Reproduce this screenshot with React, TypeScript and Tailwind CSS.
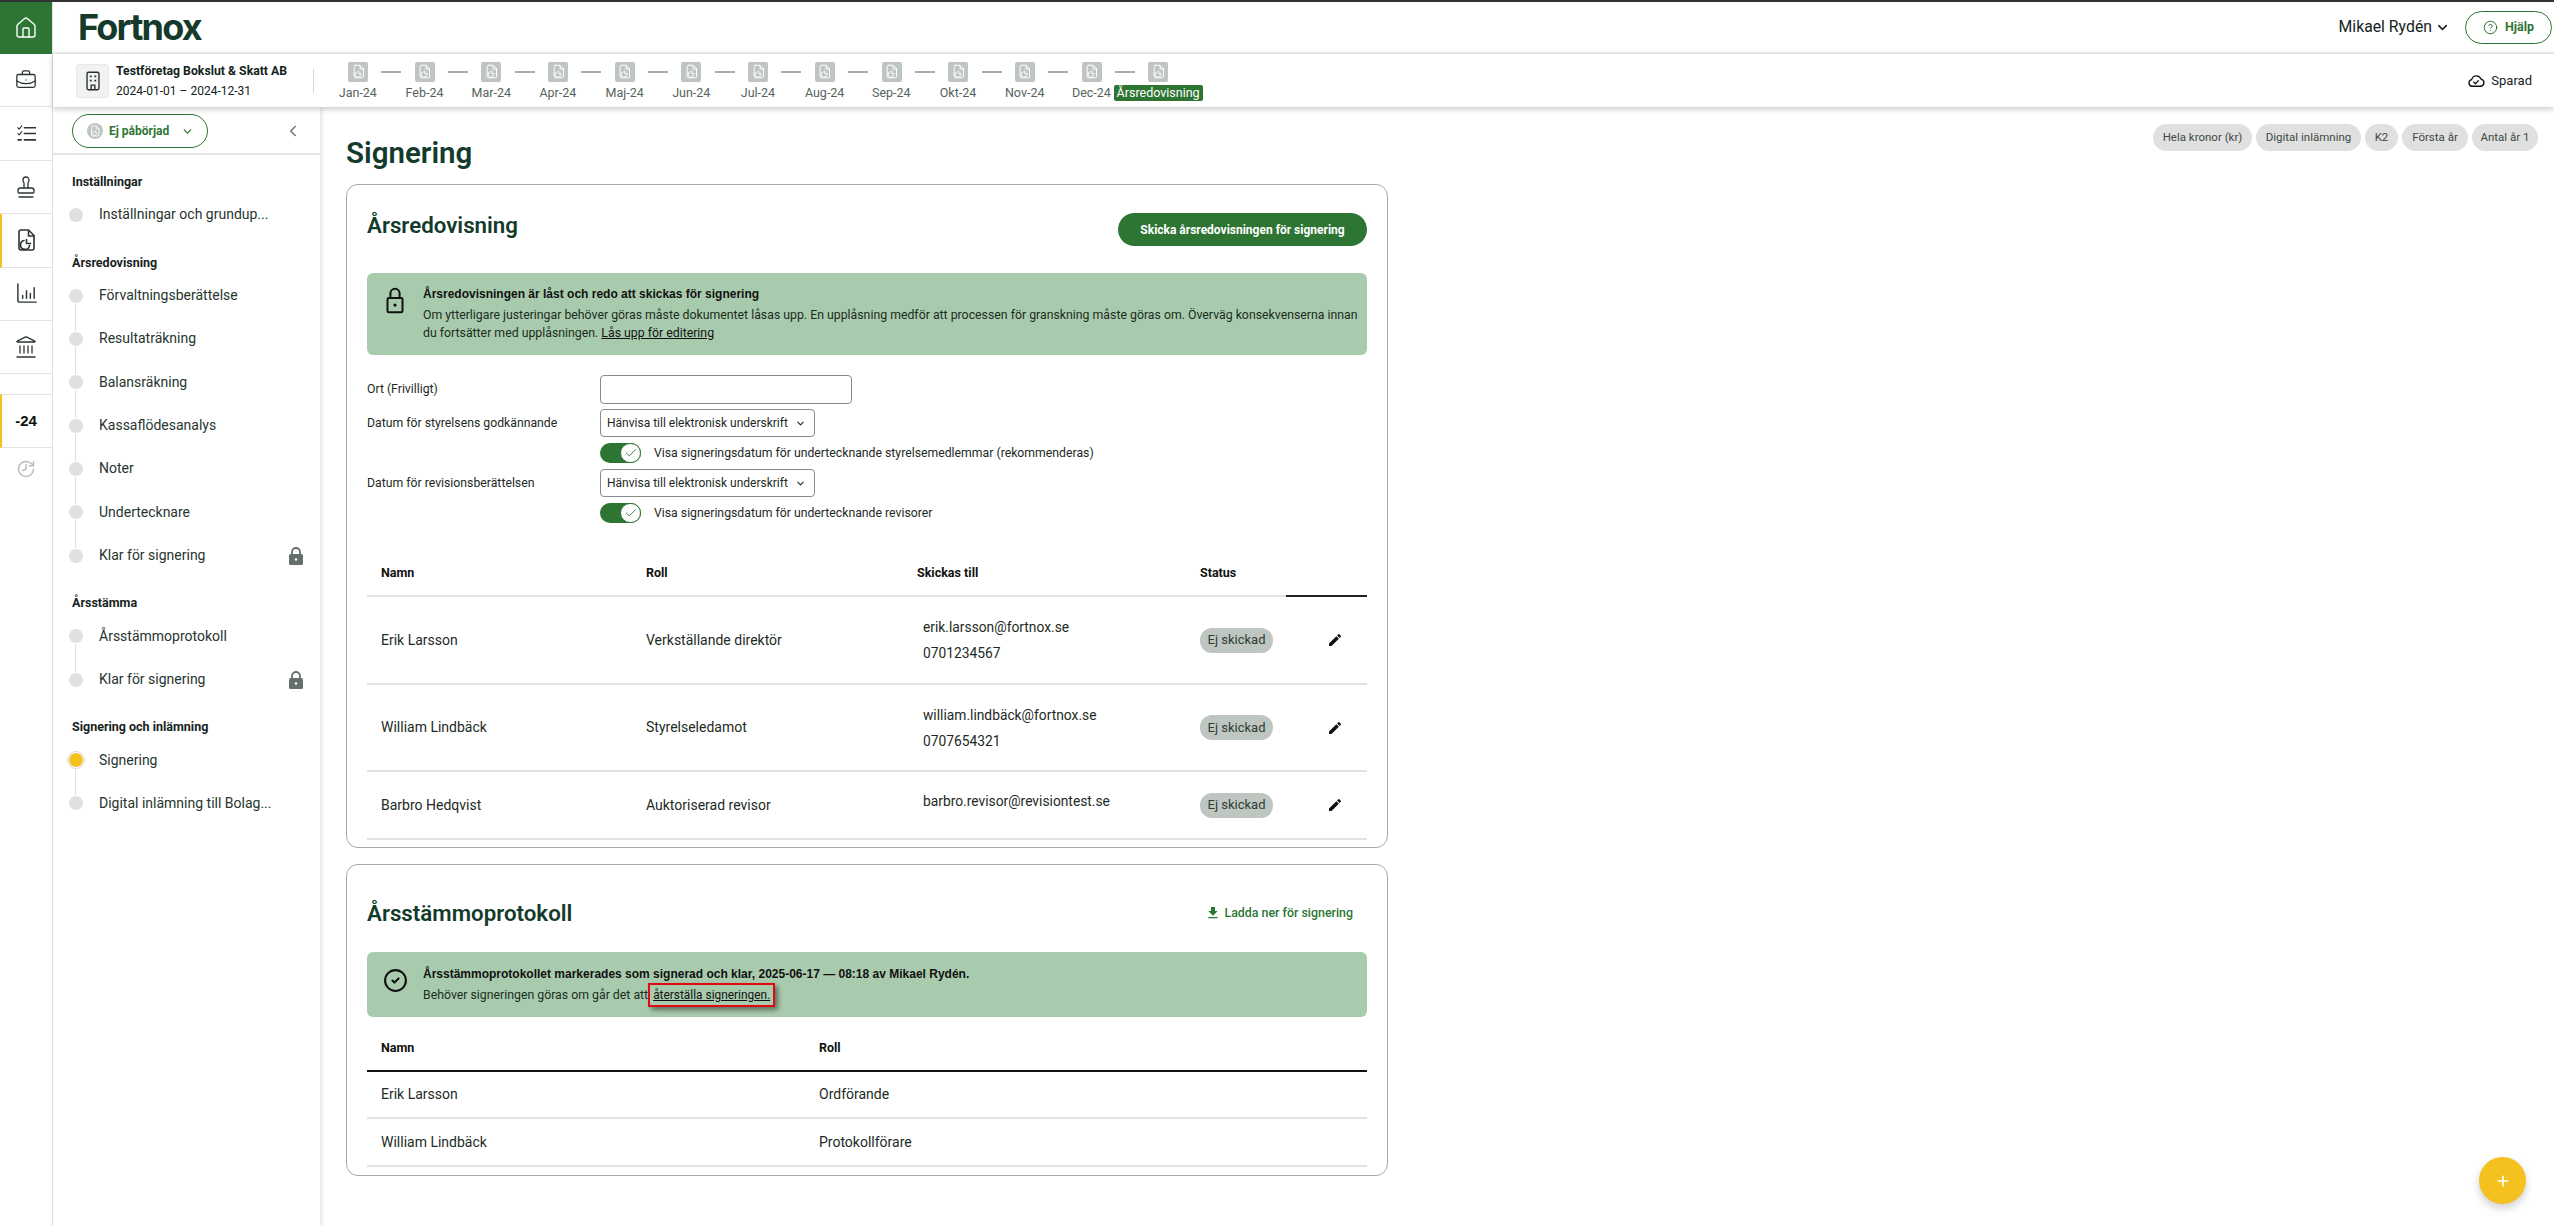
import { BriefcaseBusiness, Check, ChevronDown, ChevronLeft, CircleCheck, CircleHelp, History, House, Landmark, Plus, Stamp } from "lucide-react";
import { MdEdit, MdFileDownload } from "react-icons/md";

const months = ["Jan-24", "Feb-24", "Mar-24", "Apr-24", "Maj-24", "Jun-24", "Jul-24", "Aug-24", "Sep-24", "Okt-24", "Nov-24", "Dec-24"];

const DocIcon = ({ className }: { className?: string }) => (
  <svg viewBox="0 0 24 24" fill="none" stroke="currentColor" strokeWidth="1.6" strokeLinejoin="round" strokeLinecap="round" className={className}>
    <path d="M7 2h7.500L20 7.500V20a2 2 0 0 1-2 2H7a2 2 0 0 1-2-2V4a2 2 0 0 1 2-2z" />
    <path d="M14.500 2.500V8H20" />
    <path d="M10 12.500a4.500 4.500 0 1 0 5.500 5" />
    <path d="M12.500 11.500v4h4" />
  </svg>
);

const ChartIcon = () => (
  <svg viewBox="0 0 24 24" fill="none" stroke="currentColor" strokeWidth="1.5" strokeLinecap="round" className="w-[23px] h-[23px]">
    <path d="M3 2v17a2 2 0 0 0 2 2h17" />
    <path d="M8 17v-3M12 17V9M16 17v-5M20 17V6" />
  </svg>
);

const ChecklistIcon = () => (
  <svg viewBox="0 0 18 16" fill="none" stroke="currentColor" strokeLinecap="round" strokeLinejoin="round" className="w-[19px] h-[17px]">
    <path d="M7 2.500h10.500M7 8h10.500M7 14h10.500" strokeWidth="1.500" />
    <path d="M.7 2.500l1.300 1.300L4.500.8M.7 8l1.300 1.300L4.500 6.300" strokeWidth="1" />
    <path d="M1 14h3" strokeWidth="1.500" />
  </svg>
);

const BuildingIcon = () => (
  <svg viewBox="0 0 24 24" fill="none" stroke="#26332c" strokeWidth="1.5" className="w-[22px] h-[22px]">
    <rect x="5.500" y="2.500" width="13" height="19" rx="1.500" />
    <path d="M9.500 6v2M14.500 6v2M9.500 10.500v2M14.500 10.500v2" strokeWidth="2" />
    <path d="M10 21v-4.500h4V21" />
  </svg>
);

const CloudCheckIcon = () => (
  <svg viewBox="0 0 24 24" fill="none" stroke="#111" strokeWidth="1.8" strokeLinecap="round" strokeLinejoin="round" className="w-[18px] h-[18px]">
    <path d="M7 19a4.500 4.500 0 0 1-.8-8.900A6.500 6.500 0 0 1 18.600 9.500 4.800 4.800 0 0 1 18 19z" />
    <path d="M9 13.500l2.200 2.200 4-4.200" />
  </svg>
);

const LockTall = () => (
  <svg viewBox="0 0 24 32" fill="none" stroke="#111" strokeWidth="2.4" className="w-[20px] h-[27px]">
    <rect x="3" y="13" width="18" height="17" rx="1.500" />
    <path d="M6.500 13V7.500a5.500 5.500 0 0 1 11 0V13" />
    <circle cx="12" cy="21.500" r="2" fill="#111" stroke="none" />
  </svg>
);

const LockSolid = () => (
  <svg viewBox="0 0 14 18" className="w-[14px] h-[18px] ml-auto shrink-0">
    <path d="M3 7.500V5a4 4 0 0 1 8 0v2.500" fill="none" stroke="#66706b" strokeWidth="1.800" />
    <rect x="0" y="7" width="14" height="11" rx="1.500" fill="#66706b" />
    <circle cx="7" cy="12.500" r="1.200" fill="#fff" />
  </svg>
);

const RailTile = ({ children, active, className }: { children: React.ReactNode; active?: boolean; className?: string }) => (
  <div className={`h-[53.4px] flex items-center justify-center border-b border-[#e2e2e2] ${active ? "border-l-[2px] border-l-[#f5c11f] pr-[2px]" : ""} ${className ?? ""}`}>
    {children}
  </div>
);

const Rail = () => (
  <aside className="w-[53px] shrink-0 border-r border-[#e2e2e2] bg-white text-[#2c3531] flex flex-col">
    <div className="h-[52px] bg-[#2e7534] flex items-center justify-center text-white">
      <House size={24} strokeWidth={1.4} />
    </div>
    <RailTile><BriefcaseBusiness size={22} strokeWidth={1.4} /></RailTile>
    <RailTile><ChecklistIcon /></RailTile>
    <RailTile><Stamp size={24} strokeWidth={1.3} /></RailTile>
    <RailTile active><DocIcon className="w-[24px] h-[24px]" /></RailTile>
    <RailTile><ChartIcon /></RailTile>
    <RailTile><Landmark size={24} strokeWidth={1.3} /></RailTile>
    <div className="h-[20px]" />
    <div className="h-[54px] flex items-center justify-center border-b border-t border-[#e2e2e2] border-l-[2px] border-l-[#f5c11f] pr-[2px] font-['Liberation_Sans',sans-serif] font-bold text-[15px] text-[#111]">-24</div>
    <div className="mt-[11px] flex justify-center text-[#bcbcbc]">
      <History size={20} strokeWidth={1.8} className="-scale-x-100" />
    </div>
  </aside>
);

type NavEntry = { label: string; locked?: boolean; active?: boolean };

const NavRow = ({ label, locked, active, first, last }: NavEntry & { first: boolean; last: boolean }) => (
  <div className="h-[43.33px] flex items-stretch pr-[17px]">
    <div className="w-[14px] shrink-0 flex flex-col items-center">
      <div className={`flex-1 w-px mb-[1px] ${first ? "" : "bg-[#e0e0e0]"}`} />
      {active ? (
        <div className="w-[18px] h-[18px] -mx-[2px] shrink-0 rounded-full border border-[#d8d8d8] flex items-center justify-center">
          <div className="w-[14px] h-[14px] rounded-full bg-[#f5c11f]" />
        </div>
      ) : (
        <div className="w-[14px] h-[14px] shrink-0 rounded-full bg-[#e0e0e0]" />
      )}
      <div className={`flex-1 w-px mt-[1px] ${last ? "" : "bg-[#e0e0e0]"}`} />
    </div>
    <div className="ml-[16.500px] flex-1 flex items-center text-[14px] text-[#27352e]">
      <span>{label}</span>
      {locked && <LockSolid />}
    </div>
  </div>
);

const NavSection = ({ title, items }: { title: string; items: NavEntry[] }) => (
  <section className="mt-[16px] first:mt-0">
    <h3 className="ml-[3.5px] h-[20px] leading-[20px] mb-[1.3px] text-[12.500px] font-bold text-[#17231d]">{title}</h3>
    {items.map((item, i) => (
      <NavRow key={item.label + i} {...item} first={i === 0} last={i === items.length - 1} />
    ))}
  </section>
);

const Sidebar = () => (
  <aside className="w-[267px] shrink-0 bg-white shadow-[2px_0_4px_rgba(0,0,0,0.1)]">
    <div className="h-[48px] border-b-2 border-[#e6e6e6] pl-[19px] pr-[18px] pt-[7px] flex items-start justify-between">
      <div className="w-[136px] h-[34px] rounded-full border border-[#2e7534] flex items-center pl-[14px] gap-[6px]">
        <div className="w-[16px] h-[16px] rounded-full bg-[#bfc5c1] flex items-center justify-center text-white">
          <DocIcon className="w-[12px] h-[12px]" />
        </div>
        <span className="text-[12px] font-bold text-[#2e7534]">Ej påbörjad</span>
        <ChevronDown size={13} strokeWidth={2.4} className="text-[#2e7534] ml-[6px]" />
      </div>
      <ChevronLeft size={18} strokeWidth={2} className="text-[#6d7772] mt-[8px]" />
    </div>
    <nav className="pt-[17px] pl-[15.500px]">
      <NavSection title="Inställningar" items={[{ label: "Inställningar och grundup..." }]} />
      <NavSection
        title="Årsredovisning"
        items={[
          { label: "Förvaltningsberättelse" },
          { label: "Resultaträkning" },
          { label: "Balansräkning" },
          { label: "Kassaflödesanalys" },
          { label: "Noter" },
          { label: "Undertecknare" },
          { label: "Klar för signering", locked: true },
        ]}
      />
      <NavSection title="Årsstämma" items={[{ label: "Årsstämmoprotokoll" }, { label: "Klar för signering", locked: true }]} />
      <NavSection title="Signering och inlämning" items={[{ label: "Signering", active: true }, { label: "Digital inlämning till Bolag..." }]} />
    </nav>
  </aside>
);

const Toggle = () => (
  <div className="w-[41px] h-[20px] rounded-full bg-[#2e7534] flex justify-end shrink-0">
    <div className="w-[21px] h-[20px] rounded-full bg-white border border-[#2e7534] flex items-center justify-center text-[#2e7534]">
      <Check size={14} strokeWidth={1.6} />
    </div>
  </div>
);

const SelectBox = () => (
  <div className="w-[215px] h-[28px] rounded-[4px] border border-[#8a8a8a] flex items-center pl-[6px] pr-[8px] justify-between text-[12px] text-[#1d2a24] whitespace-nowrap">
    <span>Hänvisa till elektronisk underskrift</span>
    <ChevronDown size={11} strokeWidth={2.4} />
  </div>
);

const FormRow = ({ label, children, className }: { label?: string; children: React.ReactNode; className?: string }) => (
  <div className={`flex items-center text-[12.250px] text-[#1d2a24] ${className ?? ""}`}>
    <div className="w-[233px] shrink-0">{label}</div>
    {children}
  </div>
);

const signers = [
  { name: "Erik Larsson", role: "Verkställande direktör", email: "erik.larsson@fortnox.se", phone: "0701234567", h: "h-[88px]" },
  { name: "William Lindbäck", role: "Styrelseledamot", email: "william.lindbäck@fortnox.se", phone: "0707654321", h: "h-[87px]" },
  { name: "Barbro Hedqvist", role: "Auktoriserad revisor", email: "barbro.revisor@revisiontest.se", phone: "", h: "h-[68px]" },
];

const SignerTable = () => (
  <div className="mt-[29px] text-[14px] text-[#1d2a24]">
    <div className="grid grid-cols-[279px_271px_283px_86px_81px] h-[45px] items-center font-bold text-[12.500px] text-[#111]">
      <div className="pl-[14px] h-full flex items-center border-b-2 border-[#e2e2e2]">Namn</div>
      <div className="h-full flex items-center border-b-2 border-[#e2e2e2]">Roll</div>
      <div className="h-full flex items-center border-b-2 border-[#e2e2e2]">Skickas till</div>
      <div className="h-full flex items-center border-b-2 border-[#e2e2e2]">Status</div>
      <div className="h-full border-b-2 border-[#222]" />
    </div>
    {signers.map((s) => (
      <div key={s.name} className={`grid grid-cols-[279px_271px_283px_86px_81px] items-center border-b-2 border-[#e2e2e2] ${s.h}`}>
        <div className="pl-[14px]">{s.name}</div>
        <div>{s.role}</div>
        <div className={`pl-[6px] leading-[26px] text-[13.800px] ${s.phone ? "" : "mb-[8px]"}`}>
          <div>{s.email}</div>
          {s.phone && <div>{s.phone}</div>}
        </div>
        <div>
          <span className="inline-flex items-center justify-center w-[73px] h-[25px] rounded-[12px] bg-[#bfc6c2] text-[13px] text-[#2a4034]">Ej skickad</span>
        </div>
        <div className="pl-[41px] text-[#111]">
          <MdEdit size={16} />
        </div>
      </div>
    ))}
  </div>
);

const ProtocolTable = () => (
  <div className="mt-[10px] text-[14px] text-[#1d2a24]">
    <div className="grid grid-cols-[438px_1fr] h-[45px] items-center pl-[14px] font-bold text-[12.500px] text-[#111] border-b-2 border-[#111]">
      <div>Namn</div>
      <div>Roll</div>
    </div>
    <div className="grid grid-cols-[438px_1fr] h-[47px] items-center pl-[14px] border-b-2 border-[#e2e2e2]">
      <div>Erik Larsson</div>
      <div>Ordförande</div>
    </div>
    <div className="grid grid-cols-[438px_1fr] h-[48px] items-center pl-[14px] border-b-2 border-[#e2e2e2]">
      <div>William Lindbäck</div>
      <div>Protokollförare</div>
    </div>
  </div>
);

export default function App() {
  return (
    <div className="relative w-screen h-screen overflow-hidden bg-white border-t-2 border-[#333] font-['Roboto',sans-serif] flex">
      <Rail />
      <div className="flex-1 flex flex-col min-w-0">
        <header className="h-[52px] shrink-0 border-b-2 border-[#ececec] flex items-center justify-between pl-[25px] pr-[2px]">
          <span className="font-['Inter',sans-serif] font-bold text-[36px] leading-none tracking-[-1.800px] text-[#143a2c]">Fortnox</span>
          <div className="flex items-center">
            <span className="text-[15.800px] text-[#14231c]">Mikael Rydén</span>
            <ChevronDown size={15} strokeWidth={2.4} className="ml-[3px] text-[#14231c]" />
            <div className="ml-[15px] w-[87px] h-[33px] rounded-full border border-[#2e7534] flex items-center justify-center gap-[7px] text-[#2e7534]">
              <CircleHelp size={15} strokeWidth={1.6} />
              <span className="text-[12.500px] font-bold">Hjälp</span>
            </div>
          </div>
        </header>

        <div className="relative z-10 h-[53px] shrink-0 bg-white shadow-[0_2px_6px_rgba(0,0,0,0.22)] flex items-center pl-[23px] pr-[22px]">
          <div className="w-[33px] h-[34px] rounded-[3px] bg-[#f2f2f2] border border-[#e8e8e8] flex items-center justify-center">
            <BuildingIcon />
          </div>
          <div className="ml-[7px] w-[197px] text-[12px] leading-[20px] text-[#14231c]">
            <div className="font-bold text-[12.250px]">Testföretag Bokslut &amp; Skatt AB</div>
            <div>2024-01-01 – 2024-12-31</div>
          </div>
          <div className="w-px h-[24px] bg-[#d8d8d8]" />
          <div className="ml-[10.500px] w-[867px] pt-[1px]">
            <div className="flex items-center pl-[23.500px] gap-[13.350px]">
              {months.map((m) => (
                <div key={m} className="flex items-center gap-[13.350px]">
                  <div className="w-[20px] h-[20px] rounded-[2px] bg-[#bfc5c1] flex items-center justify-center text-white">
                    <DocIcon className="w-[15px] h-[15px]" />
                  </div>
                  <div className="w-[20px] h-[2px] bg-[#a8aeab]" />
                </div>
              ))}
              <div className="w-[20px] h-[20px] rounded-[2px] bg-[#bfc5c1] flex items-center justify-center text-white">
                <DocIcon className="w-[15px] h-[15px]" />
              </div>
            </div>
            <div className="grid grid-cols-[repeat(13,66.700px)] mt-[3px] text-[12.500px] leading-[16px] text-[#55635c] text-center">
              {months.map((m) => (
                <div key={m}>{m}</div>
              ))}
              <div className="justify-self-center px-[3px] rounded-[2px] bg-[#2e7534] text-white whitespace-nowrap">Årsredovisning</div>
            </div>
          </div>
          <div className="ml-auto flex items-center gap-[6px] text-[13px] text-[#14231c]">
            <CloudCheckIcon />
            <span>Sparad</span>
          </div>
        </div>

        <div className="flex-1 flex min-h-0">
          <Sidebar />
          <main className="flex-1 min-w-0 pl-[26px] pr-[16px] pt-[17px]">
            <div className="flex items-start justify-between h-[60px]">
              <h1 className="mt-[9px] text-[29.500px] leading-[40px] font-semibold text-[#143a2c]">Signering</h1>
              <div className="flex gap-[4px] text-[11.500px] text-[#3d4a43]">
                <span className="w-[99px] h-[27px] rounded-full bg-[#e0e0e0] flex items-center justify-center">Hela kronor (kr)</span>
                <span className="w-[105px] h-[27px] rounded-full bg-[#e0e0e0] flex items-center justify-center">Digital inlämning</span>
                <span className="w-[33px] h-[27px] rounded-full bg-[#e0e0e0] flex items-center justify-center">K2</span>
                <span className="w-[66px] h-[27px] rounded-full bg-[#e0e0e0] flex items-center justify-center">Första år</span>
                <span className="w-[66px] h-[27px] rounded-full bg-[#e0e0e0] flex items-center justify-center">Antal år 1</span>
              </div>
            </div>

            <section className="w-[1042px] h-[664px] rounded-[12px] border border-[#a8a8a8] pl-[20px] pr-[20px] pt-[28px]">
              <div className="flex items-start justify-between">
                <h2 className="text-[22.300px] leading-[24px] font-semibold text-[#143a2c]">Årsredovisning</h2>
                <button className="w-[249px] h-[33px] rounded-full bg-[#2e7534] text-white text-[12px] font-bold">Skicka årsredovisningen för signering</button>
              </div>
              <div className="mt-[27px] h-[82px] rounded-[6px] bg-[#a9cbad] flex text-[12.300px] leading-[18px] text-[#1b2b22]">
                <div className="w-[56px] shrink-0 pt-[14px] flex justify-center"><LockTall /></div>
                <div className="pt-[12px] whitespace-nowrap">
                  <div className="font-['Liberation_Sans',sans-serif] font-bold text-[12px] text-[#111]">Årsredovisningen är låst och redo att skickas för signering</div>
                  <div className="mt-[3px]">Om ytterligare justeringar behöver göras måste dokumentet låsas upp. En upplåsning medför att processen för granskning måste göras om. Överväg konsekvenserna innan</div>
                  <div>du fortsätter med upplåsningen. <a className="underline text-[#111]">Lås upp för editering</a></div>
                </div>
              </div>

              <FormRow label="Ort (Frivilligt)" className="mt-[20px]">
                <input className="w-[252px] h-[29px] rounded-[4px] border border-[#8a8a8a] outline-none" />
              </FormRow>
              <FormRow label="Datum för styrelsens godkännande" className="mt-[5px]">
                <SelectBox />
              </FormRow>
              <FormRow className="mt-[6px]">
                <Toggle />
                <span className="ml-[13px]">Visa signeringsdatum för undertecknande styrelsemedlemmar (rekommenderas)</span>
              </FormRow>
              <FormRow label="Datum för revisionsberättelsen" className="mt-[6px]">
                <SelectBox />
              </FormRow>
              <FormRow className="mt-[6px]">
                <Toggle />
                <span className="ml-[13px]">Visa signeringsdatum för undertecknande revisorer</span>
              </FormRow>

              <SignerTable />
            </section>

            <section className="mt-[16px] w-[1042px] h-[312px] rounded-[12px] border border-[#a8a8a8] pl-[20px] pr-[20px] pt-[33px]">
              <div className="flex items-center justify-between h-[30px]">
                <h2 className="text-[22.300px] leading-[30px] font-semibold text-[#143a2c]">Årsstämmoprotokoll</h2>
                <div className="flex items-center gap-[3px] pr-[14px] text-[12.400px] font-medium text-[#2e7534]">
                  <MdFileDownload size={16} />
                  <span>Ladda ner för signering</span>
                </div>
              </div>
              <div className="mt-[24px] h-[65px] rounded-[6px] bg-[#a9cbad] flex text-[12.300px] leading-[18px] text-[#1b2b22]">
                <div className="w-[56px] shrink-0 pt-[16px] flex justify-center text-[#111]"><CircleCheck size={25} strokeWidth={2} /></div>
                <div className="pt-[13px]">
                  <div className="font-['Liberation_Sans',sans-serif] font-bold text-[12px] text-[#111]">Årsstämmoprotokollet markerades som signerad och klar, 2025-06-17 — 08:18 av Mikael Rydén.</div>
                  <div className="mt-[3px]">
                    Behöver signeringen göras om går det att
                    <a className="inline-block -my-[3px] px-[3px] leading-[20px] text-[11.900px] border-2 border-[#e30613] underline text-[#111] shadow-[3px_3px_5px_rgba(0,0,0,0.45)]">återställa signeringen.</a>
                  </div>
                </div>
              </div>
              <ProtocolTable />
            </section>
          </main>
        </div>
      </div>

      <button className="absolute bottom-[22px] right-[28px] w-[47px] h-[47px] rounded-full bg-[#f5c11f] text-white flex items-center justify-center shadow-[0_4px_8px_rgba(0,0,0,0.2)]">
        <Plus size={16} strokeWidth={2.6} />
      </button>
    </div>
  );
}
